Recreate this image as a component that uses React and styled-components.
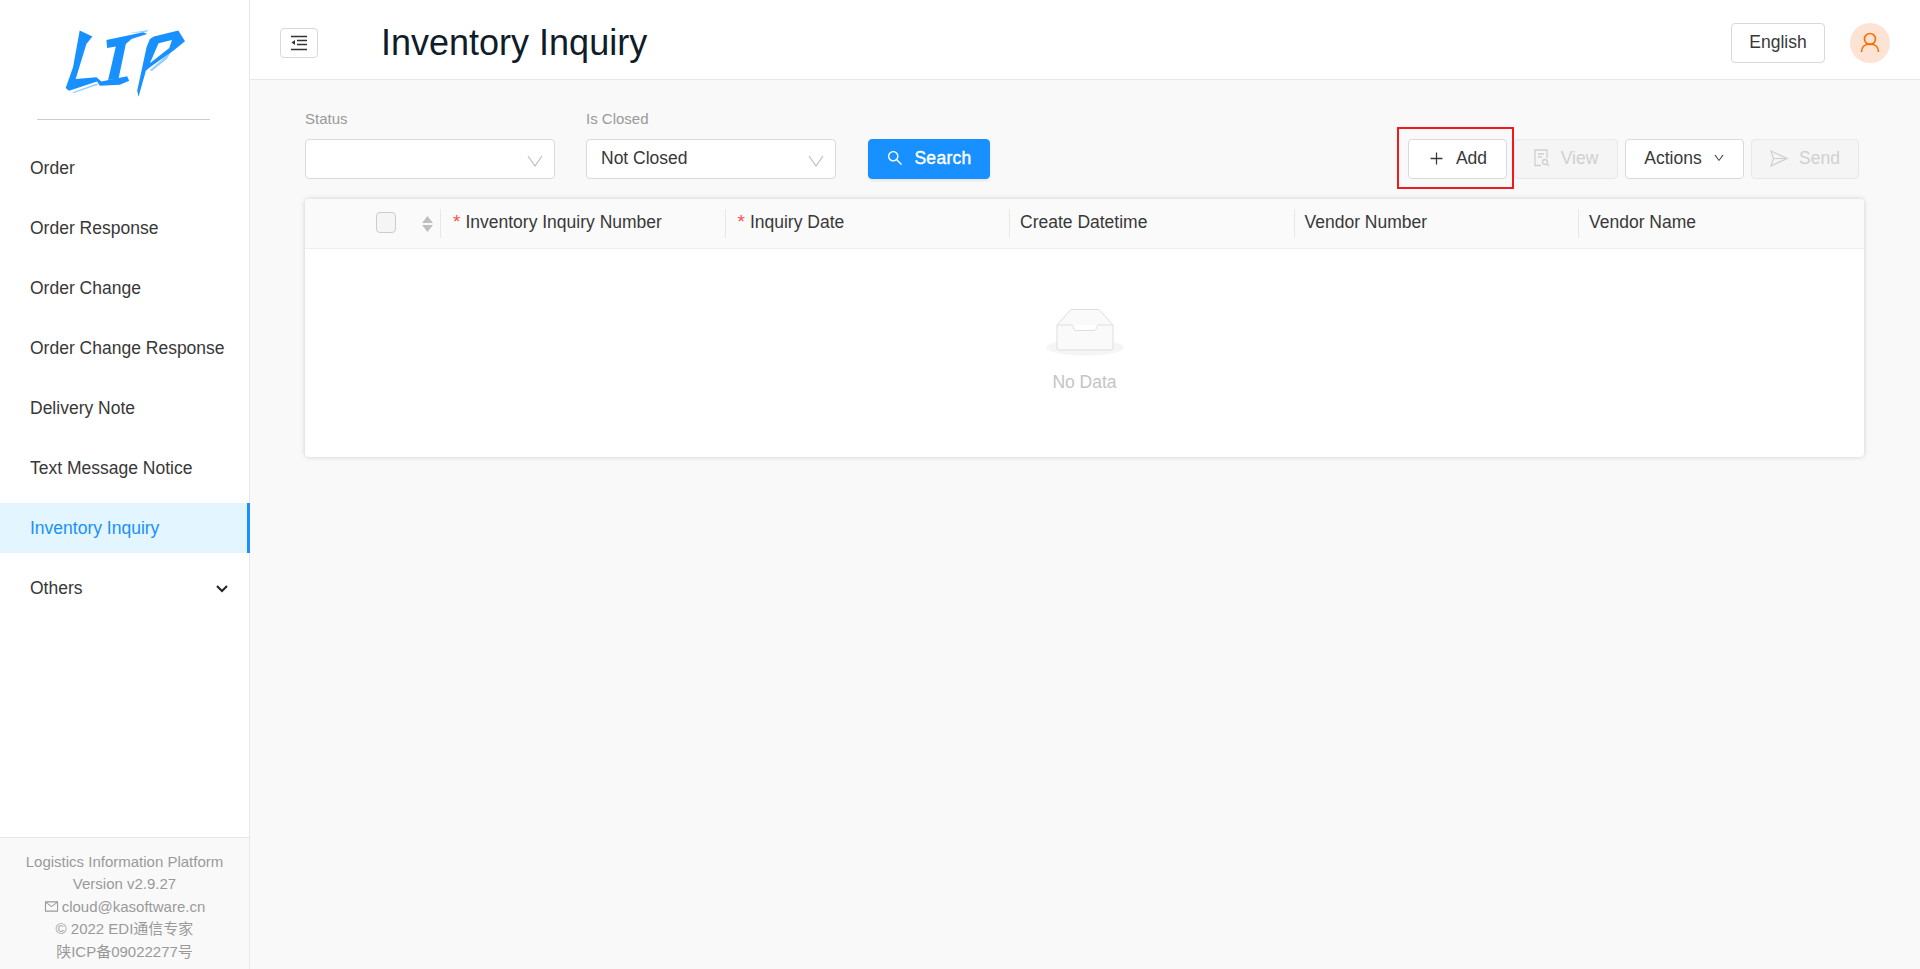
import React from "react";
import styled, { createGlobalStyle } from "styled-components";
import { AiOutlineSearch, AiOutlinePlus, AiOutlineDown, AiOutlineMail } from "react-icons/ai";

const Global = createGlobalStyle`
  html, body { margin: 0; padding: 0; height: 100%; }
  body { font-family: "Liberation Sans", Arial, "Noto Sans CJK SC", sans-serif; background: #f9f9f9; color: #383838; }
  * { box-sizing: border-box; }
`;

const Shell = styled.div`display: flex; height: 969px; overflow: hidden;`;
const Sidebar = styled.aside`
  width: 250px; flex: none; display: flex; flex-direction: column;
  background: #fff; border-right: 1px solid #e8e8e8;
`;
const LogoArea = styled.div`
  height: 120px; margin: 0 39px 0 37px; padding: 27px 0 0 26px; border-bottom: 1px solid #ccc;
`;
const Menu = styled.nav`flex: 1; padding-top: 23px; display: flex; flex-direction: column; gap: 10px;`;
const MenuItem = styled.div`
  height: 50px; padding: 1px 19px 0 30px; display: flex; align-items: center; justify-content: space-between;
  font-size: 17.5px; color: ${p => (p.$active ? "#1890ff" : "#383838")};
  background: ${p => (p.$active ? "#e3f5ff" : "transparent")};
  border-right: 3px solid ${p => (p.$active ? "#1890ff" : "transparent")};
  margin-right: -1px;
`;
const Footer = styled.footer`
  height: 132px; padding-top: 13px; background: #f9f9f9; border-top: 1px solid #e8e8e8;
  text-align: center; font-size: 15px; line-height: 22.4px; color: #999;
`;
const MailIcon = styled(AiOutlineMail)`vertical-align: -2px; margin-right: 3px; font-size: 15px;`;

const Main = styled.main`flex: 1; min-width: 0; display: flex; flex-direction: column;`;
const Header = styled.header`
  height: 80px; flex: none; display: flex; align-items: center; padding: 7px 30px 0 30px;
  background: #fff; border-bottom: 1px solid #e8e8e8;
`;
const Toggle = styled.button`
  width: 38px; height: 30px; padding: 0; display: flex; align-items: center; justify-content: center;
  background: #fff; border: 1px solid #d9d9d9; border-radius: 4px;
`;
const Title = styled.h1`
  margin: 0 0 0 63px; flex: 1; font-size: 36px; font-weight: 400; color: #101c2a; line-height: 70px;
`;
const LangButton = styled.button`
  width: 94px; height: 40px; background: #fff; border: 1px solid #d9d9d9; border-radius: 4px;
  font: inherit; font-size: 17.5px; color: #383838; padding: 0 0 2px; margin-right: 25px;
`;
const Avatar = styled.div`
  width: 40px; height: 40px; border-radius: 50%; background: #fde3d3;
  display: flex; align-items: center; justify-content: center;
`;

const Content = styled.div`flex: 1; padding: 30px 56px 0 55px;`;
const Toolbar = styled.div`display: flex; align-items: flex-end; height: 69px; margin-bottom: 20px; padding-right: 5px;`;
const Field = styled.div`width: 250px; margin-right: ${p => p.$mr || 0}px;`;
const FieldLabel = styled.div`font-size: 15px; line-height: 20px; color: #999; margin-bottom: 10px;`;
const Select = styled.div`
  height: 40px; background: #fff; border: 1px solid #d9d9d9; border-radius: 4px;
  display: flex; align-items: center; justify-content: space-between; padding: 0 11px 2px 14px;
  font-size: 17.5px; color: #383838;
`;
const ChevronBox = styled.span`display: flex; margin-top: 5px;`;
const Btn = styled.button`
  height: 40px; display: inline-flex; align-items: center; justify-content: center; gap: 11px; padding: 0 0 2px;
  width: ${p => p.$w}px; margin-left: ${p => p.$ml || 0}px;
  font: inherit; font-size: 17.5px; border-radius: 4px;
  color: ${p => (p.$disabled ? "#d0d0d0" : "#383838")};
  background: ${p => (p.$disabled ? "#f5f5f5" : "#fff")};
  border: 1px solid ${p => (p.$disabled ? "#e8e8e8" : "#d9d9d9")};
`;
const PrimaryBtn = styled(Btn)`
  color: #fff; background: #1890ff; border-color: #1890ff; margin-left: 32px; margin-right: auto;
  box-shadow: 0 2px 3px rgba(0,0,0,.08); -webkit-text-stroke: .4px #fff; letter-spacing: .3px; gap: 10px;
`;
const Highlight = styled.div`
  position: relative; padding: 12px 7px 10px 11px; margin-bottom: -10px;
  &::after { content: ""; position: absolute; inset: 0; border: 2px solid #f01a1e; pointer-events: none; }
`;
const Table = styled.div`
  background: #fff; height: 258px; border-radius: 4px; box-shadow: 0 0 5px rgba(0,0,30,.18);
`;
const HeadRow = styled.div`
  height: 50px; display: grid; grid-template-columns: 135px repeat(5, 284.5px); background: #fafafa;
  border-bottom: 1px solid #eee; border-radius: 4px 4px 0 0;
`;
const SelectCell = styled.div`
  position: relative; display: flex; align-items: center; padding: 0 0 2px 71px;
`;
const Check = styled.span`width: 20px; height: 21px; border: 1px solid #ccc; background: #f5f5f5; border-radius: 4px;`;
const SortArrows = styled.span`
  position: absolute; left: 117px; top: 17px; display: flex; flex-direction: column; gap: 2px;
`;
const HeadCell = styled.div`
  position: relative; display: flex; align-items: center; padding: 0 0 2px 11px; font-size: 17.5px; color: #383838;
  &::before { content: ""; position: absolute; left: 0; top: 10px; bottom: 10px; width: 1px; background: #e8e8e8; }
`;
const Required = styled.span`color: #ff4d4f; font-family: "Liberation Mono", monospace; margin-right: 3px; font-size: 19px;`;
const Empty = styled.div`display: flex; flex-direction: column; align-items: center; padding-top: 58px;`;
const EmptyArt = styled.svg`margin-left: 1px;`;
const EmptyText = styled.div`font-size: 17.5px; color: #c4c4c4; margin-top: 13px; line-height: 24px;`;

const Logo = () => (
  <svg width="127" height="74" viewBox="70 50 380 220" fill="#1890ff" aria-hidden="true">
    <path d="M120 60 L158 78 L140 100 L108 205 L170 200 L185 212 L262 197 L268 210 L240 222 L180 225 L172 212 L88 240 L78 232 L100 170 Z" />
    <path d="M200 88 L310 65 L322 70 L275 85 L258 100 L236 205 L205 208 L228 108 L202 112 Z" />
    <path fillRule="evenodd" d="M342 78 L415 60 L435 92 L400 120 L330 170 L318 180 L296 258 L292 240 L320 110 L330 85 Z M356 98 L330 158 L388 112 L396 88 Z" />
    <path d="M95 246 L170 218 L175 222 L105 246 Z M330 178 L395 122 L380 146 L335 182 Z M265 68 L325 58 L320 64 Z" opacity=".45" />
  </svg>
);
const FoldIcon = () => (
  <svg width="18" height="16" viewBox="0 0 18 16" fill="none" stroke="#333" strokeWidth="1.3" aria-hidden="true">
    <path d="M1 1.500H17M7 5.500H17M7 9.500H17M1 14.500H17" />
    <path d="M5 5V10L1.500 7.500Z" fill="#333" stroke="none" />
  </svg>
);
const Chevron = () => (
  <ChevronBox>
    <svg width="16" height="12" viewBox="0 0 16 12" fill="none" stroke="#bbb" strokeWidth="1.1" aria-hidden="true">
      <path d="M1 1L8 11L15 1" />
    </svg>
  </ChevronBox>
);
const BoldChevron = () => (
  <svg width="12" height="8" viewBox="0 0 12 8" fill="none" stroke="#222" strokeWidth="2" aria-hidden="true">
    <path d="M1 1L6 6L11 1" />
  </svg>
);
const UserIcon = () => (
  <svg width="20" height="22" viewBox="0 0 20 22" fill="none" stroke="#ff6a00" strokeWidth="1.6" aria-hidden="true">
    <circle cx="10" cy="7" r="5.500" />
    <path d="M1.500 20c0-5 3.500-8 8.500-8s8.500 3 8.500 8" />
  </svg>
);
const FileSearchIcon = () => (
  <svg width="16" height="18" viewBox="0 0 16 18" fill="none" stroke="#d0d0d0" strokeWidth="1.3" aria-hidden="true">
    <path d="M7 16.500H1V1H13V9" />
    <path d="M4 5H10M4 8H8" />
    <circle cx="11" cy="13" r="2.500" />
    <path d="M13 15L15 17" />
  </svg>
);
const SendIcon = () => (
  <svg width="18" height="17" viewBox="0 0 18 17" fill="none" stroke="#d0d0d0" strokeWidth="1.2" aria-hidden="true">
    <path d="M1 1L17 8.500L1 16L3.500 8.500Z" />
    <path d="M3.500 8.500H17" />
  </svg>
);
const SortIcon = () => (
  <>
    <svg width="11" height="7" viewBox="0 0 11 7" aria-hidden="true"><path d="M5.500 0L11 7H0Z" fill="#bfbfbf" /></svg>
    <svg width="11" height="7" viewBox="0 0 11 7" aria-hidden="true"><path d="M5.500 7L0 0H11Z" fill="#bfbfbf" /></svg>
  </>
);
const EmptyIcon = () => (
  <EmptyArt width="80" height="50" viewBox="0 0 80 50" aria-hidden="true">
    <ellipse cx="40" cy="40.500" rx="39" ry="8" fill="#f5f5f5" />
    <path d="M12 18L26 2.500H54L68 18V41a2 2 0 0 1-2 2H14a2 2 0 0 1-2-2Z" fill="#fafafa" stroke="#dedede" strokeWidth="1" />
    <path d="M12 18H26.500C28 18 28.500 19 28.500 20.500C28.500 22.500 30 23.500 31 23.500H49C50 23.500 51.500 22.500 51.500 20.500C51.500 19 52 18 53.500 18H68" fill="#fff" stroke="#dedede" strokeWidth="1" />
  </EmptyArt>
);

const items = ["Order", "Order Response", "Order Change", "Order Change Response", "Delivery Note", "Text Message Notice"];

export default function App() {
  return (
    <Shell>
      <Global />
      <Sidebar>
        <LogoArea><Logo /></LogoArea>
        <Menu>
          {items.map(t => <MenuItem key={t}>{t}</MenuItem>)}
          <MenuItem $active>Inventory Inquiry</MenuItem>
          <MenuItem>Others <BoldChevron /></MenuItem>
        </Menu>
        <Footer>
          <div>Logistics Information Platform</div>
          <div>Version v2.9.27</div>
          <div><MailIcon />cloud@kasoftware.cn</div>
          <div>© 2022 EDI通信专家</div>
          <div>陕ICP备09022277号</div>
        </Footer>
      </Sidebar>
      <Main>
        <Header>
          <Toggle aria-label="Collapse"><FoldIcon /></Toggle>
          <Title>Inventory Inquiry</Title>
          <LangButton>English</LangButton>
          <Avatar><UserIcon /></Avatar>
        </Header>
        <Content>
          <Toolbar>
            <Field $mr={31}><FieldLabel>Status</FieldLabel><Select><span /><Chevron /></Select></Field>
            <Field><FieldLabel>Is Closed</FieldLabel><Select>Not Closed<Chevron /></Select></Field>
            <PrimaryBtn $w={122}><AiOutlineSearch size={18} />Search</PrimaryBtn>
            <Highlight><Btn $w={99}><AiOutlinePlus size={17} />Add</Btn></Highlight>
            <Btn $w={104} $disabled><FileSearchIcon />View</Btn>
            <Btn $w={119} $ml={7}>Actions<AiOutlineDown size={12} /></Btn>
            <Btn $w={108} $ml={7} $disabled><SendIcon />Send</Btn>
          </Toolbar>
          <Table>
            <HeadRow>
              <SelectCell><Check /><SortArrows><SortIcon /></SortArrows></SelectCell>
              <HeadCell><Required>*</Required>Inventory Inquiry Number</HeadCell>
              <HeadCell><Required>*</Required>Inquiry Date</HeadCell>
              <HeadCell>Create Datetime</HeadCell>
              <HeadCell>Vendor Number</HeadCell>
              <HeadCell>Vendor Name</HeadCell>
            </HeadRow>
            <Empty><EmptyIcon /><EmptyText>No Data</EmptyText></Empty>
          </Table>
        </Content>
      </Main>
    </Shell>
  );
}
